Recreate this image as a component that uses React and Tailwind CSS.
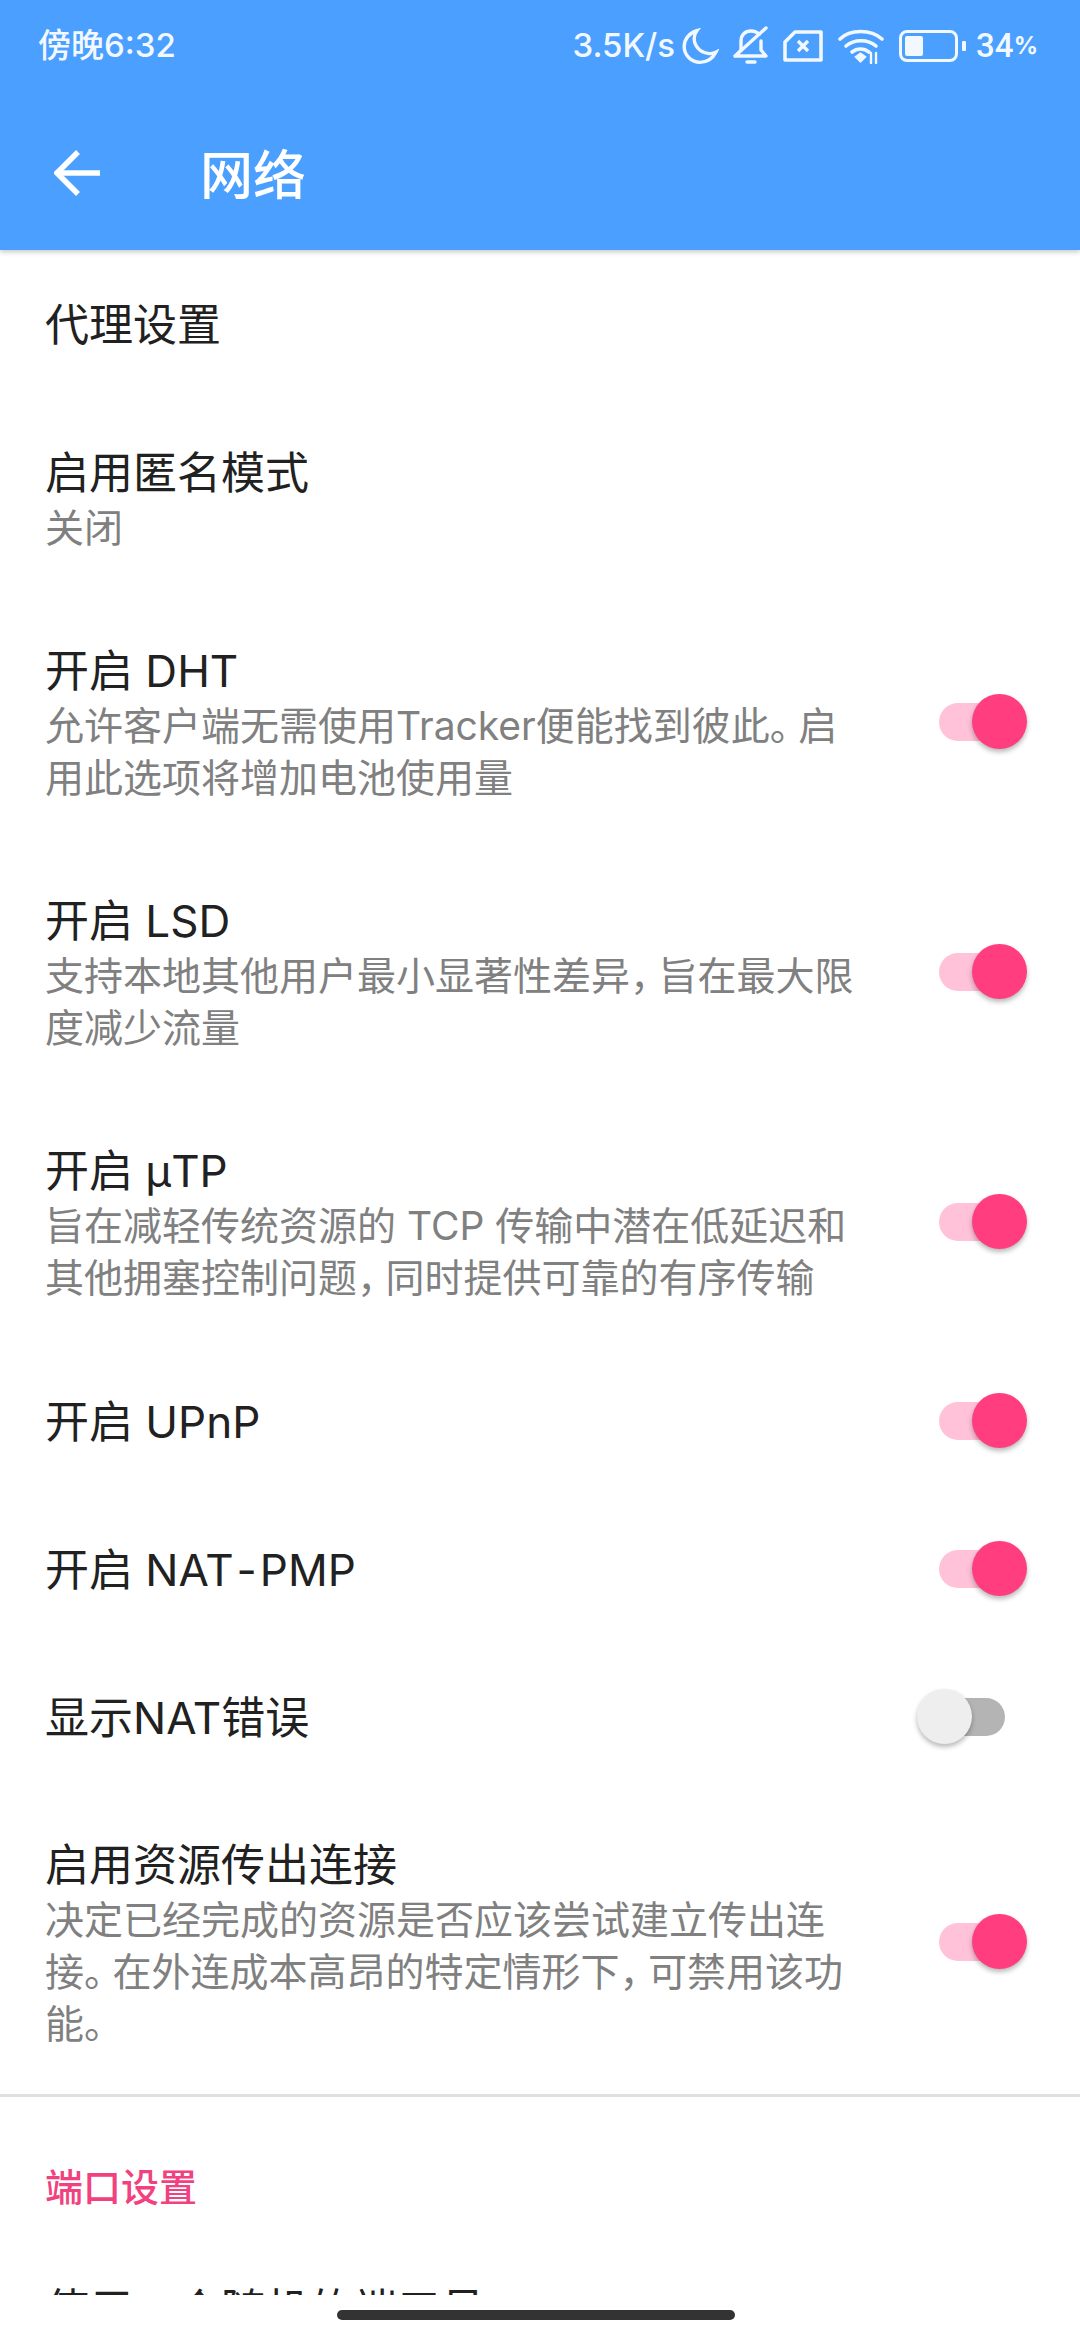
const F = { fontFamily: '"Inter","Noto Sans CJK SC",sans-serif' };

function Sw({ on }) {
  return (
    <div className="relative w-[110px] h-[55px] shrink-0 mb-[4px]">
      <div className={`absolute left-[22px] top-[9px] w-[66px] h-[38px] rounded-full ${on ? "bg-[#ffc2d8]" : "bg-[#b4b4b4]"}`} />
      <div className={`absolute top-0 w-[55px] h-[55px] rounded-full shadow-[0_3px_5px_rgba(0,0,0,0.28)] ${on ? "right-0 bg-[#ff3d7f]" : "left-0 bg-[#eeeeee]"}`} />
    </div>
  );
}

function Row({ title, sub, sw, cls = "" }) {
  return (
    <div className={`flex items-center pl-[45px] pr-[53px] ${cls}`}>
      <div className="flex-1 min-w-0">
        <div className="text-[44px] leading-[58px] text-[#212121]">{title}</div>
        {sub && <div className="text-[39px] leading-[52px] text-[#808080] w-[812px]">{sub}</div>}
      </div>
      {sw !== undefined && <Sw on={sw} />}
    </div>
  );
}

const P = ({ c }) => <span className="[font-feature-settings:'halt'] mr-[9px]">{c}</span>;

function StatusIcons() {
  return (
    <div className="flex items-center text-[33px] font-medium text-[#f2f8ff]">
      <span className="mr-[6px] whitespace-nowrap">3.5K/s</span>
      <svg width="38" height="38" viewBox="0 0 36 36" fill="none" stroke="#f2f8ff" strokeWidth="3.2" className="mr-[14px]"><path d="M15 3.5C8 5.500 3 11.500 3 18.500 3 27 10 33.500 18 33.500c6.500 0 12-3.500 15-9.500-2 1-5 1.400-7.500 1C18 24 12.500 18 12.500 11c0-2.700 1-5.500 2.500-7.500z" /></svg>
      <svg width="36" height="40" viewBox="0 0 36 40" fill="none" stroke="#f2f8ff" strokeWidth="3.4" strokeLinecap="round" strokeLinejoin="round" className="mr-[14px]"><path d="M8 24V15C8 9 12 5 18 5c3 0 6 1 8 3.500M28 15v9l5 6H3l5-6" /><path d="M2 30 33 2" /><path d="M14 36h8" /></svg>
      <svg width="40" height="32" viewBox="0 0 40 32" fill="none" stroke="#f2f8ff" strokeWidth="3.6" strokeLinejoin="round" className="mr-[15px]"><path d="M12 2h26v28H2V12z" /><path d="M15 11l10 10M25 11 15 21" strokeWidth="3.4" /></svg>
      <svg width="46" height="36" viewBox="0 0 46 36" fill="none" stroke="#f2f8ff" strokeWidth="3.6" strokeLinecap="round" className="mr-[15px]"><path d="M2 11C12 1 33 1 44 11" /><path d="M8 18c8-7 22-7 30 0" /><path d="M14 24c5-4 12-4 17 0" /><path d="M19 29l3.500 3.500L26 29l-3.500-2.500z" fill="#f2f8ff" /><path d="M33 25v10M38 25v10" strokeWidth="2.4" /></svg>
      <div className="w-[59px] h-[32px] rounded-[8px] border-[3.5px] border-[#f2f8ff] mr-[4px] p-[3px]"><div className="w-[18px] h-full bg-[#f2f8ff] rounded-[2px]" /></div>
      <div className="w-[4px] h-[10px] bg-[#f2f8ff] rounded-[1px] mr-[10px]" />
      <span className="font-[Roboto]">34</span><span className="text-[24px] font-bold">%</span>
    </div>
  );
}

export default function App() {
  return (
    <div style={F} className="relative w-[1080px] h-[2340px] overflow-hidden bg-white">
      <div className="relative z-10 h-[250px] bg-[#4a9fff] shadow-[0_2px_5px_rgba(0,0,0,0.22)]">
        <div className="flex items-center justify-between h-[92px] pl-[38px] pr-[42px]">
          <span className="text-[33px] font-medium text-[#f2f8ff]">傍晚6:32</span>
          <StatusIcons />
        </div>
        <div className="flex items-center h-[158px] pl-[54px] pt-[4px]">
          <svg width="46" height="46" viewBox="0 0 46 46" fill="none" stroke="white" strokeWidth="5.5" className="mr-[100px]"><path d="M46 23H4" /><path d="M24 2 3 23l21 21" /></svg>
          <span className="text-[53px] leading-[70px] mt-[5px] font-medium text-white">网络</span>
        </div>
      </div>

      <Row title="代理设置" cls="h-[150px]" />
      <Row title="启用匿名模式" sub="关闭" cls="h-[198px]" />
      <Row title="开启 DHT" sub={<>允许客户端无需使用Tracker便能找到彼此<P c="。" />启用此选项将增加电池使用量</>} sw={true} cls="h-[250px]" />
      <Row title="开启 LSD" sub={<>支持本地其他用户最小显著性差异<P c="，" />旨在最大限度减少流量</>} sw={true} cls="h-[250px]" />
      <Row title="开启 µTP" sub={<>旨在减轻传统资源的 TCP 传输中潜在低延迟和其他拥塞控制问题<P c="，" />同时提供可靠的有序传输</>} sw={true} cls="h-[250px]" />
      <Row title="开启 UPnP" sw={true} cls="h-[148px]" />
      <Row title={<>开启 NAT<span className="px-[3px]">-</span>PMP</>} sw={true} cls="h-[148px]" />
      <Row title="显示NAT错误" sw={false} cls="h-[148px]" />
      <Row title="启用资源传出连接" sub={<>决定已经完成的资源是否应该尝试建立传出连接<P c="。" />在外连成本高昂的特定情形下<P c="，" />可禁用该功能。</>} sw={true} cls="h-[302px]" />

      <div className="h-[3px] bg-[#e0e0e0]" />
      <div className="h-[140px] pl-[45px] pt-[65px] text-[38px] leading-[50px] font-medium text-[#f2417f]">端口设置</div>
      <Row title="使用一个随机的端口号" cls="h-[146px]" />

      <div className="absolute left-0 right-0 bottom-0 h-[45px] bg-white z-10 flex justify-center pr-[8px]">
        <div className="w-[398px] h-[10px] mt-[15px] rounded-full bg-[#333333]" />
      </div>
    </div>
  );
}
